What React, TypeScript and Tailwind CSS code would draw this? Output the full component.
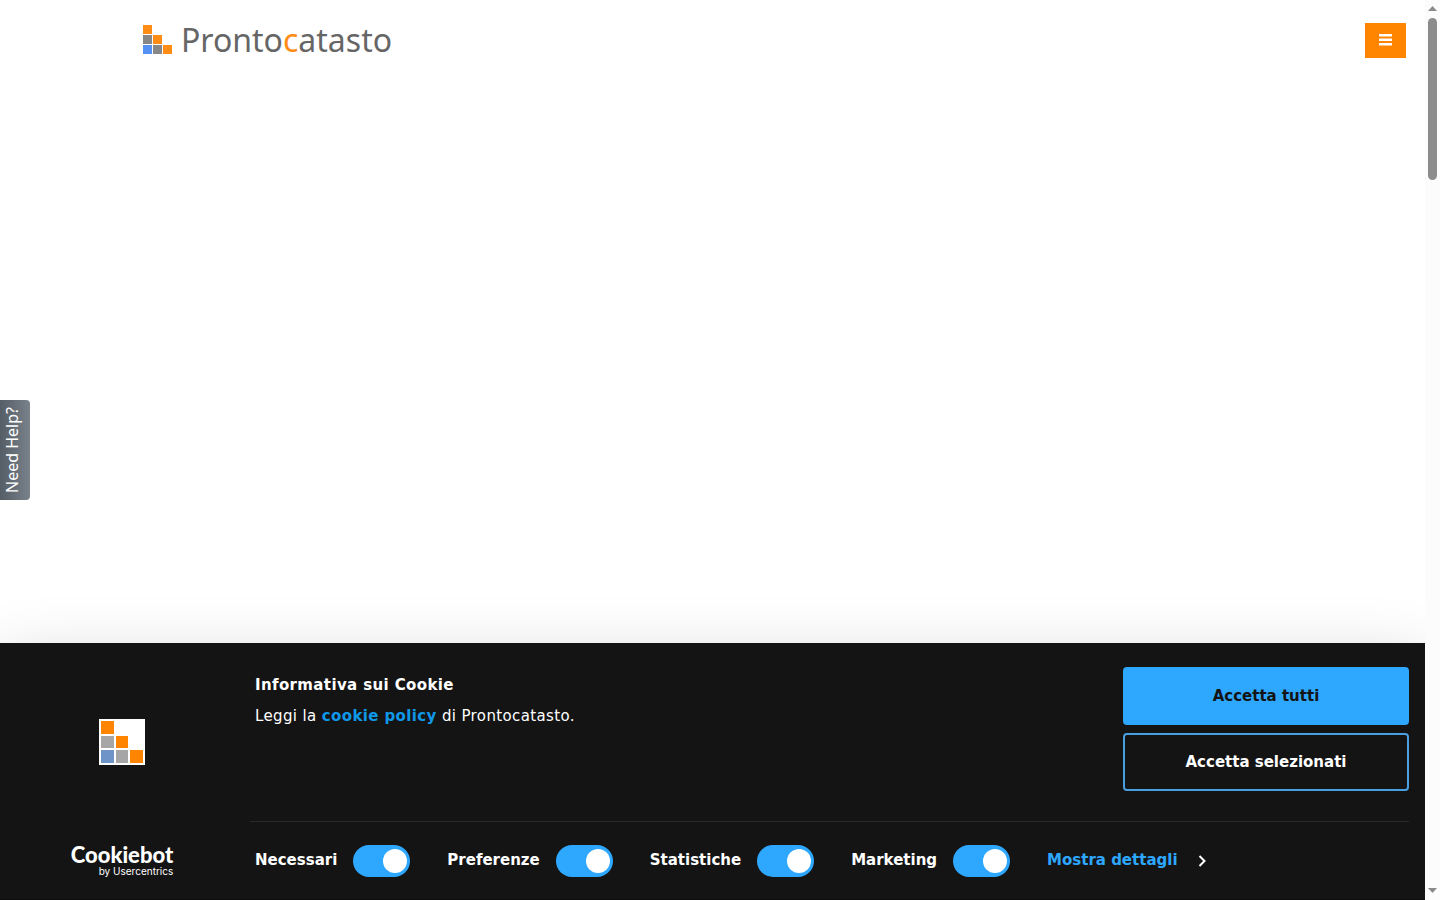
import { useState } from "react";

const CATEGORIES = [
  { id: "necessary", label: "Necessari" },
  { id: "preferences", label: "Preferenze" },
  { id: "statistics", label: "Statistiche" },
  { id: "marketing", label: "Marketing" },
];

function BrandMark() {
  return (
    <svg width="30" height="30" viewBox="0 0 30 30" aria-hidden="true">
      <path fill="#ff8c14" d="M0 0h9v9H0zM10 10h9v9h-9zM20 20h9v9h-9z" />
      <path fill="#878787" d="M0 10h9v9H0zM10 20h9v9h-9z" />
      <path fill="#5590f5" d="M0 20h9v9H0z" />
    </svg>
  );
}

function BannerMark() {
  return (
    <svg width="46" height="46" viewBox="0 0 46 46" aria-hidden="true">
      <path fill="#fff" d="M0 0h46v46H0z" />
      <path fill="#ff8500" d="M2 2h13v13H2zM17 17h12v12H17zM31 31h13v13H31z" />
      <path fill="#a6a6a6" d="M2 17h13v12H2zM17 31h12v13H17z" />
      <path fill="#6f94c8" d="M2 31h13v13H2z" />
    </svg>
  );
}

function Header() {
  return (
    <header className="flex h-20 items-center justify-between pr-[19px] pl-[143px]">
      <a href="#" className="flex items-center gap-2 font-['Noto_Sans',sans-serif] text-[32px] leading-10 text-[#666]">
        <BrandMark />
        <span>
          Pronto<span className="text-[#ff8c14]">c</span>atasto
        </span>
      </a>
      <button
        type="button"
        aria-label="Menu"
        className="flex h-[35px] w-[41px] items-center justify-center bg-[#ff8500] text-white"
      >
        <svg width="13" height="12" viewBox="0 0 13 12" fill="currentColor" aria-hidden="true">
          <rect width="13" height="2.5" rx="0.5" />
          <rect y="4.500" width="13" height="2.5" rx="0.5" />
          <rect y="9" width="13" height="2.5" rx="0.5" />
        </svg>
      </button>
    </header>
  );
}

function CookieBanner() {
  const [enabled, setEnabled] = useState<Record<string, boolean>>({
    necessary: true,
    preferences: true,
    statistics: true,
    marketing: true,
  });

  const toggle = (id: string) => {
    // necessary cookies can't be switched off
    if (id === "necessary") return;
    setEnabled((prev) => ({ ...prev, [id]: !prev[id] }));
  };

  return (
    <section
      aria-label="Informativa sui Cookie"
      className="flex border-b border-[#0c0c0c] bg-[#141414] pr-4 text-[15px] text-white shadow-[0_32px_68px_rgba(0,0,0,0.3)]"
    >
      <div className="flex w-[250px] shrink-0 flex-col items-center justify-between pt-[76px] pr-[6px] pb-[22px]">
        <BannerMark />
        <a href="#" className="flex flex-col items-end">
          <span className="font-['Lato',sans-serif] text-[22px] leading-5 font-black">Cookiebot</span>
          <span className="font-['Inter',sans-serif] text-[10px] leading-3">by Usercentrics</span>
        </a>
      </div>

      <div className="min-w-0 flex-1">
        <div className="flex justify-between pt-6 pb-[30px] pl-[5px]">
          <div className="pt-[6px] tracking-wide">
            <h2 className="leading-6 font-bold">Informativa sui Cookie</h2>
            <p className="mt-[7px] leading-6">
              Leggi la{" "}
              <a href="#" className="font-bold text-[#1098e8]">
                cookie policy
              </a>{" "}
              di Prontocatasto.
            </p>
          </div>
          <div className="flex w-[286px] flex-col gap-2 font-bold">
            <button type="button" className="h-[58px] rounded-sm bg-[#2ea7ff] text-[#141414]">
              Accetta tutti
            </button>
            <button type="button" className="h-[58px] rounded-sm border-2 border-[#4a9fe0]">
              Accetta selezionati
            </button>
          </div>
        </div>

        <div className="flex h-[78px] items-center gap-[37px] border-t border-[#292929] pl-[5px] font-bold">
          {CATEGORIES.map(({ id, label }) => (
            <label key={id} className="flex items-center gap-4">
              {label}
              <input
                type="checkbox"
                checked={enabled[id]}
                onChange={() => toggle(id)}
                className="flex h-8 w-[57px] appearance-none items-center rounded-full bg-[#d6d6d6] px-[3px] before:size-6 before:rounded-full before:bg-white checked:justify-end checked:bg-[#2ea7ff]"
              />
            </label>
          ))}
          <a href="#" className="flex items-center gap-5 text-[#2ea7ff]">
            Mostra dettagli
            <svg width="8" height="12" viewBox="0 0 8 12" fill="none" stroke="#fff" strokeWidth="2" aria-hidden="true">
              <path d="M1.500 1 6.500 6l-5 5" />
            </svg>
          </a>
        </div>
      </div>
    </section>
  );
}

function ScrollTrack() {
  return (
    <div aria-hidden="true" className="flex w-[15px] shrink-0 flex-col items-center justify-between bg-[#fcfcfc] pt-[6px] pb-[7px]">
      <div className="flex flex-col items-center gap-[7px]">
        <svg width="9" height="5" viewBox="0 0 9 5" fill="#8a8a8a">
          <path d="M0 5 4.500 0 9 5z" />
        </svg>
        <div className="h-[162px] w-[9px] rounded-full bg-[#8c8c8c]" />
      </div>
      <svg width="9" height="5" viewBox="0 0 9 5" fill="#8a8a8a">
        <path d="M0 0h9L4.500 5z" />
      </svg>
    </div>
  );
}

export default function App() {
  return (
    <div className="flex min-h-screen bg-white font-['DejaVu_Sans',sans-serif]">
      <div className="relative flex min-w-0 flex-1 flex-col overflow-hidden">
        <Header />
        <main className="flex-1" />
        <CookieBanner />
        <button
          type="button"
          className="absolute top-1/2 left-0 flex h-[100px] w-[30px] -translate-y-1/2 items-center justify-center rounded-r bg-linear-to-r from-[#555d66] to-[#79818a] pr-[6px] text-base text-white"
        >
          <span className="rotate-180 font-['Noto_Sans',sans-serif] [writing-mode:vertical-rl]">Need Help?</span>
        </button>
      </div>
      <ScrollTrack />
    </div>
  );
}
